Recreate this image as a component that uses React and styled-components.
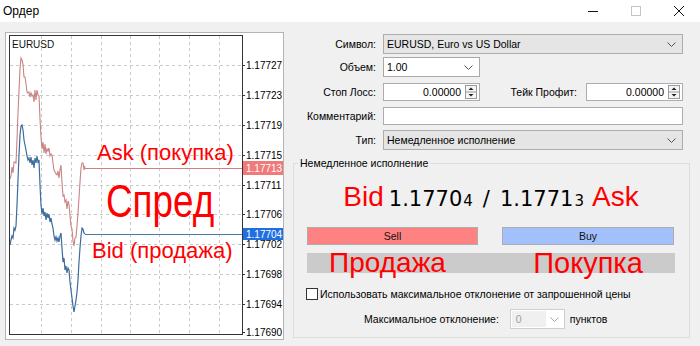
import React from 'react';
import styled, { createGlobalStyle } from 'styled-components';

const Global = createGlobalStyle`
  html, body { margin: 0; padding: 0; background: #f0f0f0; }
  body {
    width: 700px; height: 346px; overflow: hidden;
    font-family: "Liberation Sans", Arial, sans-serif;
    font-size: 10.5px; color: #000;
  }
  * { box-sizing: border-box; }
`;

const Window = styled.div`
  width: 700px; height: 346px;
  display: flex; flex-direction: column;
  background: #f0f0f0;
`;

const TitleBar = styled.div`
  height: 22px; flex-shrink: 0;
  background: #fff;
  display: flex; align-items: center;
  padding-left: 3px;
`;

const Title = styled.span`
  flex: 1;
  font-size: 12px;
`;

const Controls = styled.div`
  display: flex; height: 100%;
`;

const CtrlBtn = styled.div`
  width: 43px; height: 100%;
  display: flex; align-items: center; justify-content: center;
`;

const Main = styled.div`
  flex: 1; display: flex;
`;

const ChartFrame = styled.div`
  position: relative;
  flex-shrink: 0;
  width: 279px; height: 308px;
  margin: 10px 0 0 5px;
  border: 1px solid #b4b4b4;
  background: #fff;
  padding: 2px 0 0 2px;
  svg { display: block; }
`;

const Note = styled.span`
  position: absolute;
  left: ${p => p.$left}px; top: ${p => p.$top}px;
  font-family: "Liberation Sans", Arial, sans-serif;
  font-size: ${p => p.$size}px;
  line-height: 1;
  color: #ff0000;
  white-space: nowrap;
  transform-origin: left top;
  transform: scaleX(${p => p.$sx || 1});
`;

const Panel = styled.div`
  flex: 1;
  display: flex; flex-direction: column;
  padding: 12px 10px 0 6px;
`;

const FormRow = styled.div`
  display: flex; align-items: center;
  height: ${p => p.$h}px;
  margin-top: ${p => p.$mt || 0}px;
  margin-right: 7px;
`;

const Label = styled.div`
  width: 93px; flex-shrink: 0;
  padding-right: 7px;
  text-align: right;
  white-space: nowrap;
`;

const SideLabel = styled.div`
  flex: 1;
  text-align: right;
  padding-right: 9px;
  white-space: nowrap;
`;

const Select = styled.div`
  display: flex; align-items: center; justify-content: space-between;
  height: 100%;
  ${p => (p.$w ? `width: ${p.$w}px;` : 'flex: 1;')}
  border: 1px solid ${p => (p.$grey ? '#adadad' : '#a8a8a8')};
  background: ${p => (p.$grey ? '#e5e5e5' : '#fff')};
  padding: 0 6px 0 3px;
`;

const TextBox = styled.div`
  flex: 1; height: 100%;
  border: 1px solid #abadb3;
  background: #fff;
`;

const SpinField = styled.div`
  width: 97px; height: 100%;
  display: flex; align-items: center; justify-content: flex-end;
  border: 1px solid #abadb3;
  background: #fff;
  padding-right: 2px;
`;

const SpinValue = styled.span`
  margin-right: 4px;
`;

const Group = styled.fieldset`
  margin: 7px 0 0 3px;
  padding: 0;
  border: 1px solid #dcdcdc;
  min-width: 0;
`;

const Legend = styled.legend`
  margin-left: 4px;
  padding: 0 2px;
  line-height: 13px;
  font-size: 10.5px;
`;

const GroupBody = styled.div`
  padding: 12px 14px 8px 13px;
  display: flex; flex-direction: column;
`;

const Quote = styled.div`
  height: 30px; line-height: 30px;
  display: flex; justify-content: center; align-items: baseline;
  white-space: nowrap;
`;

const QuoteWord = styled.span`
  font-family: "Liberation Sans", Arial, sans-serif;
  font-size: 28px; color: #ff0000;
  margin-left: ${p => p.$ml || 0}px;
`;

const Price = styled.span`
  font-family: "DejaVu Sans", sans-serif;
  font-size: 21px; color: #000;
  margin-left: ${p => p.$ml || 0}px;
`;

const PriceTail = styled.span`
  font-family: "DejaVu Sans", sans-serif;
  font-size: 15px; color: #000;
  margin-left: 1px;
`;

const Buttons = styled.div`
  margin-top: 15px;
  display: grid; grid-template-columns: 171px 172px; column-gap: 24px;
  height: 18px;
`;

const TradeButton = styled.div`
  border: 1px solid #adadad;
  background: ${p => p.$bg};
  display: flex; align-items: center; justify-content: center;
  color: #111;
`;

const Bar = styled.div`
  margin-top: 8px;
  height: 20px;
  background: #cbcbcb;
  display: grid; grid-template-columns: 171px 172px; column-gap: 24px;
  line-height: 20px;
  overflow: visible;
`;

const BarWord = styled.span`
  text-align: center;
  font-family: "Liberation Sans", Arial, sans-serif;
  font-size: ${p => p.$size}px; color: #ff0000;
  white-space: nowrap;
  transform: translateX(${p => p.$dx || 0}px);
`;

const CheckRow = styled.div`
  margin-top: 15px;
  height: 12px;
  display: flex; align-items: center;
`;

const CheckBox = styled.div`
  width: 12px; height: 12px;
  border: 1px solid #333;
  background: #fff;
  margin-left: -1px;
`;

const CheckLabel = styled.span`
  margin-left: 2px;
  white-space: nowrap;
`;

const DevRow = styled.div`
  margin-top: 9px;
  height: 20px;
  display: flex; align-items: center;
`;

const DevLabel = styled.span`
  margin-left: 57px;
  white-space: nowrap;
`;

const DevSelect = styled.div`
  margin-left: 11px;
  width: 55px; height: 100%;
  border: 1px solid #cfcfcf;
  background: #fff;
  display: flex; align-items: center;
  padding: 1px;
`;

const DevValue = styled.div`
  width: 34px; height: 100%;
  background: #f0f0f0;
  color: #a0a0a0;
  padding-left: 4px;
  display: flex; align-items: center;
`;

const DevChevron = styled.div`
  flex: 1; display: flex; justify-content: center;
`;

const Unit = styled.span`
  margin-left: 5px;
`;

const Chevron = ({ color = '#555' }) => (
  <svg width="9" height="5" viewBox="0 0 9 5">
    <polyline points="0.5,0.5 4.5,4.5 8.5,0.5" fill="none" stroke={color} strokeWidth="1" />
  </svg>
);

const Spinner = () => (
  <svg width="12" height="14" viewBox="0 0 12 14">
    <rect x="0.5" y="0.5" width="11" height="13" fill="#f5f5f5" stroke="#9a9a9a" />
    <line x1="1" y1="7" x2="11" y2="7" stroke="#9a9a9a" />
    <polygon points="3.5,5 8.5,5 6,2.5" fill="#222" />
    <polygon points="3.5,9 8.5,9 6,11.5" fill="#222" />
  </svg>
);

// chart data in page coordinates, converted to svg coordinates (offset 8, 35)
const bidPage = [
  [10, 245], [11, 240], [12, 236], [13, 238], [14, 228], [15, 230], [16, 226], [17, 205], [18, 180],
  [19, 155], [20, 135], [21, 126], [22, 125], [23, 130], [24, 140], [25, 145], [26, 150], [27, 156],
  [28, 160], [29, 158], [30, 163], [31, 157], [32, 165], [33, 160], [34, 168], [35, 158], [36, 163],
  [37, 156], [38, 162], [39, 160], [40, 185], [41, 205], [42, 214], [43, 208], [44, 216], [45, 212],
  [46, 220], [47, 213], [48, 218], [49, 214], [50, 222], [51, 218], [52, 224], [53, 228], [54, 236],
  [55, 240], [56, 237], [57, 241], [58, 238], [59, 242], [60, 236], [61, 233], [62, 248], [63, 262],
  [64, 258], [65, 270], [66, 266], [67, 273], [68, 268], [69, 270], [70, 282], [71, 290], [72, 298],
  [73, 306], [74, 312], [75, 306], [76, 300], [77, 292], [78, 280], [79, 262], [80, 248], [81, 236],
  [82, 228], [83, 229], [84, 233], [85, 234],
];
const toSvg = (pts, dy = 0) => pts.map(([x, y]) => `${x - 8},${y - 35 + dy}`).join(' ');
const askNoise = [0, 2, -3, 1, 0, -2, 3, 0, -1, 2, 0, -2, 1, 0, 3, -2, 0, 2, -1, 0];
const askPage = bidPage.map(([x, y], i) => [x, y - 66 + askNoise[i % askNoise.length]]);

const gridX = [33, 63, 93, 122, 151, 181, 211];
const gridY = [30, 60, 90, 120, 150, 179, 209, 239, 269];
const labels = [
  ['1.17727', 30], ['1.17723', 60], ['1.17719', 90], ['1.17715', 120], ['1.17711', 150],
  ['1.17706', 179], ['1.17702', 209], ['1.17698', 239], ['1.17694', 269], ['1.17690', 297],
];

const Chart = () => (
  <svg width="275" height="302" viewBox="0 0 275 302">
    <rect x="1.5" y="0.5" width="233" height="299" fill="#fff" />
    {gridX.map(x => (
      <line key={'gx' + x} x1={x + 0.5} y1="1" x2={x + 0.5} y2="299" stroke="#c9c9c9" strokeDasharray="3,3" />
    ))}
    {gridY.map(y => (
      <line key={'gy' + y} x1="2" y1={y + 0.5} x2="234" y2={y + 0.5} stroke="#c9c9c9" strokeDasharray="3,3" />
    ))}
    <text x="4" y="13" fontFamily="Liberation Sans, Arial, sans-serif" fontSize="10" fill="#111">EURUSD</text>
    <polyline points={toSvg(askPage)} fill="none" stroke="#c98383" strokeWidth="1.1" />
    <line x1="77" y1="133.5" x2="234" y2="133.5" stroke="#cf7f7f" strokeWidth="1" />
    <polyline points={toSvg(bidPage)} fill="none" stroke="#3b6c9e" strokeWidth="1.2" />
    <line x1="77" y1="199.5" x2="234" y2="199.5" stroke="#4a79a6" strokeWidth="1" />
    <rect x="1.5" y="0.5" width="233" height="299" fill="none" stroke="#333" strokeWidth="1" />
    {labels.map(([t, y]) => (
      <g key={t}>
        <line x1="234" y1={y + 0.5} x2="237" y2={y + 0.5} stroke="#333" />
        <text x="238" y={y + 3.5} fontFamily="Liberation Sans, Arial, sans-serif" fontSize="10" fill="#000">{t}</text>
      </g>
    ))}
    <rect x="235" y="126" width="40" height="14" fill="#f07a7a" />
    <text x="238" y="136.5" fontFamily="Liberation Sans, Arial, sans-serif" fontSize="10" fill="#fff">1.17713</text>
    <rect x="235" y="193" width="40" height="12" fill="#1f6fe3" />
    <text x="238" y="202.5" fontFamily="Liberation Sans, Arial, sans-serif" fontSize="10" fill="#fff">1.17704</text>
  </svg>
);

export default function App() {
  return (
    <Window>
      <Global />
      <TitleBar>
        <Title>Ордер</Title>
        <Controls>
          <CtrlBtn>
            <svg width="10" height="10" viewBox="0 0 10 10">
              <line x1="0" y1="5.5" x2="10" y2="5.5" stroke="#111" />
            </svg>
          </CtrlBtn>
          <CtrlBtn>
            <svg width="10" height="10" viewBox="0 0 10 10">
              <rect x="0.5" y="0.5" width="9" height="9" fill="none" stroke="#c4c4c4" />
            </svg>
          </CtrlBtn>
          <CtrlBtn>
            <svg width="10" height="10" viewBox="0 0 10 10">
              <line x1="0" y1="0" x2="10" y2="10" stroke="#111" />
              <line x1="10" y1="0" x2="0" y2="10" stroke="#111" />
            </svg>
          </CtrlBtn>
        </Controls>
      </TitleBar>
      <Main>
        <ChartFrame>
          <Chart />
          <Note $left={91} $top={109} $size={22}>Ask (покупка)</Note>
          <Note $left={100} $top={145} $size={46} $sx={0.8}>Спред</Note>
          <Note $left={86} $top={207} $size={22}>Bid (продажа)</Note>
        </ChartFrame>
        <Panel>
          <FormRow $h={20}>
            <Label>Символ:</Label>
            <Select $grey>
              <span>EURUSD, Euro vs US Dollar</span>
              <Chevron />
            </Select>
          </FormRow>
          <FormRow $h={20} $mt={3}>
            <Label>Объем:</Label>
            <Select $w={97}>
              <span>1.00</span>
              <Chevron />
            </Select>
          </FormRow>
          <FormRow $h={18} $mt={6}>
            <Label>Стоп Лосс:</Label>
            <SpinField>
              <SpinValue>0.00000</SpinValue>
              <Spinner />
            </SpinField>
            <SideLabel>Тейк Профит:</SideLabel>
            <SpinField>
              <SpinValue>0.00000</SpinValue>
              <Spinner />
            </SpinField>
          </FormRow>
          <FormRow $h={18} $mt={6}>
            <Label>Комментарий:</Label>
            <TextBox />
          </FormRow>
          <FormRow $h={20} $mt={5}>
            <Label>Тип:</Label>
            <Select $grey>
              <span>Немедленное исполнение</span>
              <Chevron />
            </Select>
          </FormRow>
          <Group>
            <Legend>Немедленное исполнение</Legend>
            <GroupBody>
              <Quote>
                <QuoteWord>Bid</QuoteWord>
                <Price $ml={5}>1.1770</Price>
                <PriceTail>4</PriceTail>
                <Price $ml={10}>/</Price>
                <Price $ml={10}>1.1771</Price>
                <PriceTail>3</PriceTail>
                <QuoteWord $ml={8}>Ask</QuoteWord>
              </Quote>
              <Buttons>
                <TradeButton $bg="#ff8282">Sell</TradeButton>
                <TradeButton $bg="#a2c0fb">Buy</TradeButton>
              </Buttons>
              <Bar>
                <BarWord $size={28} $dx={-5}>Продажа</BarWord>
                <BarWord $size={29}>Покупка</BarWord>
              </Bar>
              <CheckRow>
                <CheckBox />
                <CheckLabel>Использовать максимальное отклонение от запрошенной цены</CheckLabel>
              </CheckRow>
              <DevRow>
                <DevLabel>Максимальное отклонение:</DevLabel>
                <DevSelect>
                  <DevValue>0</DevValue>
                  <DevChevron>
                    <Chevron color="#a8a8a8" />
                  </DevChevron>
                </DevSelect>
                <Unit>пунктов</Unit>
              </DevRow>
            </GroupBody>
          </Group>
        </Panel>
      </Main>
    </Window>
  );
}
